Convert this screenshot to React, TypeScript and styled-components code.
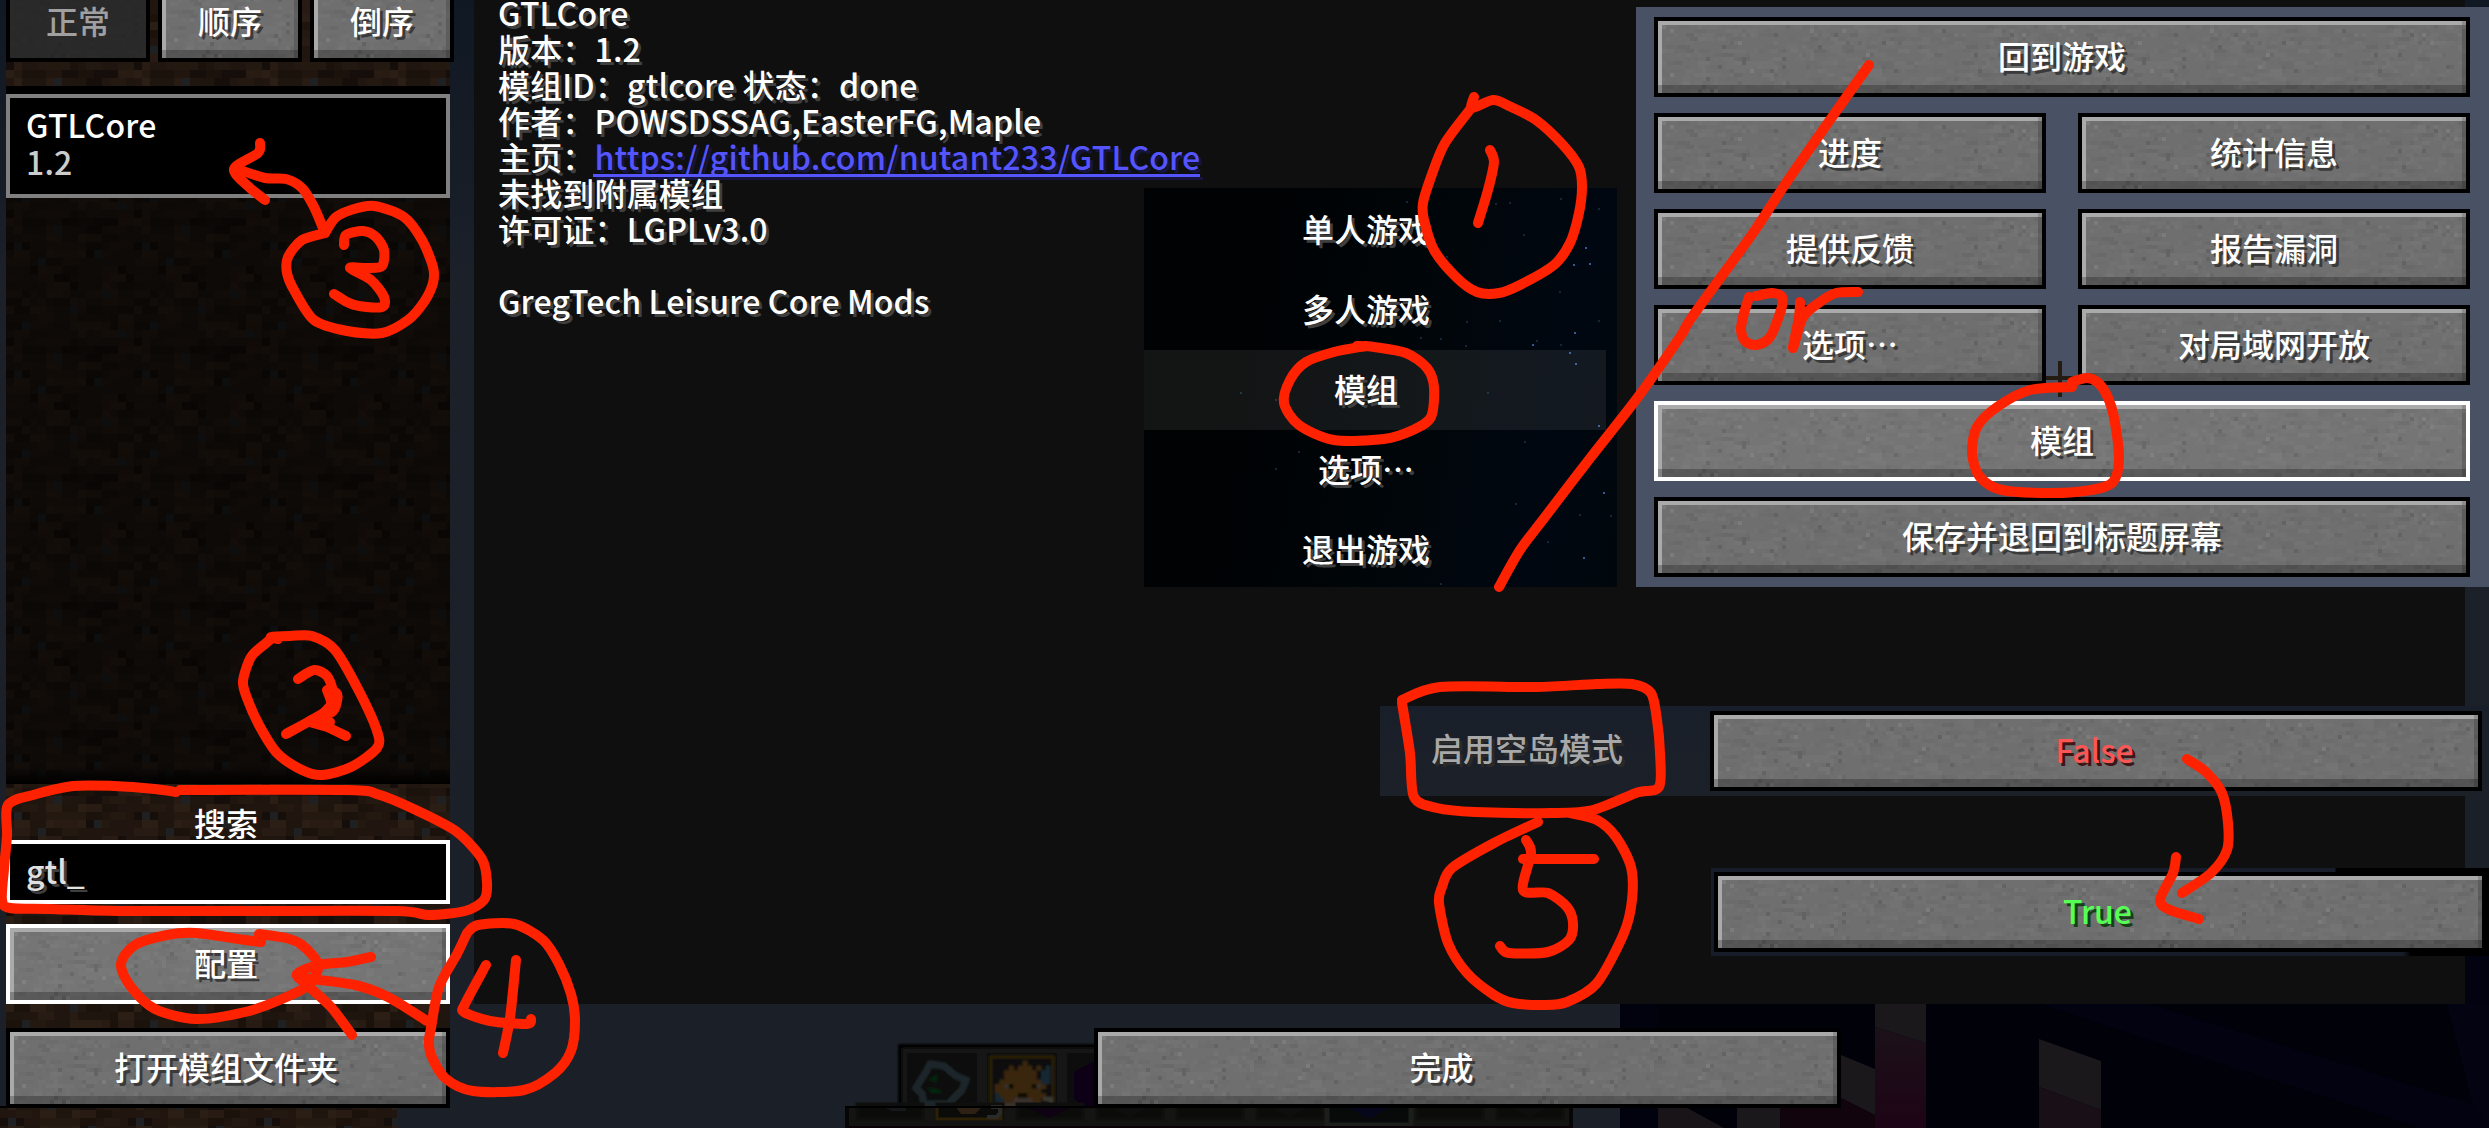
import React from "react";
import styled, { createGlobalStyle, css } from "styled-components";

const GlobalStyle = createGlobalStyle`
  * { box-sizing: border-box; }
  html, body { margin: 0; padding: 0; background: #0f0f0f; overflow: hidden; }
`;

/* ---------- helpers ---------- */

type Pt = [number, number];

function rng(seed: number) {
  let s = seed;
  return () => {
    s = (s * 1664525 + 1013904223) % 4294967296;
    return s / 4294967296;
  };
}

function smooth(pts: Pt[]): string {
  let d = `M${pts[0][0]} ${pts[0][1]}`;
  for (let i = 0; i < pts.length - 1; i++) {
    const p0 = pts[Math.max(0, i - 1)];
    const p1 = pts[i];
    const p2 = pts[i + 1];
    const p3 = pts[Math.min(pts.length - 1, i + 2)];
    const k = 7;
    d += `C${(p1[0] + (p2[0] - p0[0]) / k).toFixed(1)} ${(p1[1] + (p2[1] - p0[1]) / k).toFixed(1)} ${(p2[0] - (p3[0] - p1[0]) / k).toFixed(1)} ${(p2[1] - (p3[1] - p1[1]) / k).toFixed(1)} ${p2[0]} ${p2[1]}`;
  }
  return d;
}

/* ---------- textures ---------- */

const dirtPalette = ["#20160f", "#1b120c", "#2b1e15", "#150e0a", "#241911", "#1e150f", "#20160f", "#281b14"];
const dirtStones = ["6,1", "1,3", "11,4", "4,5", "12,9", "8,11", "2,13", "14,14"];

function dirtCells() {
  const r = rng(77);
  const out: React.ReactNode[] = [];
  for (let y = 0; y < 16; y++) {
    let x = 0;
    while (x < 16) {
      const run = Math.min(16 - x, r() > 0.55 ? 2 : 1);
      const fill = dirtPalette[Math.floor(r() * dirtPalette.length)];
      out.push(<rect key={`${x}-${y}`} x={x * 8} y={y * 8} width={run * 8} height={8} fill={fill} />);
      x += run;
    }
  }
  dirtStones.forEach((s) => {
    const [x, y] = s.split(",").map(Number);
    out.push(<rect key={`s${s}`} x={x * 8} y={y * 8} width={8} height={8} fill="#1e2022" />);
  });
  return out;
}

function stoneCells() {
  const r = rng(4242);
  const out: React.ReactNode[] = [];
  const shades = ["#6c6c6c", "#727272", "#6d6d6d", "#717171", "#747474", "#696969", "#6d6d6d", "#727272"];
  for (let i = 0; i < 620; i++) {
    const x = Math.floor(r() * 98) * 4;
    const y = Math.floor(r() * 18) * 4;
    const w = (1 + Math.floor(r() * 3)) * 4;
    out.push(<rect key={i} x={x} y={y} width={w} height={4} fill={shades[Math.floor(r() * 8)]} />);
  }
  for (let i = 0; i < 40; i++) {
    const x = Math.floor(r() * 98) * 4;
    const y = Math.floor(r() * 18) * 4;
    out.push(<rect key={`d${i}`} x={x} y={y} width={4} height={4} fill={i % 3 ? "#636363" : "#7b7b7b"} />);
  }
  return out;
}

const DefsSvg = styled.svg`
  position: absolute;
  width: 0;
  height: 0;
`;

const TextureDefs = () => (
  <DefsSvg aria-hidden>
    <defs>
      <pattern id="dirt-a" width="128" height="128" patternUnits="userSpaceOnUse" y="4" shapeRendering="crispEdges">
        {dirtCells()}
      </pattern>
      <pattern id="dirt-b" width="128" height="128" patternUnits="userSpaceOnUse" y="70" shapeRendering="crispEdges">
        {dirtCells()}
      </pattern>
      <pattern id="stone" width="400" height="72" patternUnits="userSpaceOnUse" shapeRendering="crispEdges">
        <rect width="400" height="72" fill="#6f6f6f" />
        {stoneCells()}
      </pattern>
    </defs>
  </DefsSvg>
);

const FillSvg = styled.svg`
  position: absolute;
  inset: 0;
  width: 100%;
  height: 100%;
  z-index: -2;
`;

const Texture = ({ id }: { id: string }) => (
  <FillSvg aria-hidden>
    <rect width="100%" height="100%" fill={`url(#${id})`} />
  </FillSvg>
);

/* ---------- shared ---------- */

const shadow = css`
  text-shadow: 3px 3px 0 #3f3f3f;
`;

type ButtonState = "normal" | "hover" | "disabled";

const ButtonBox = styled.button<{ $state: ButtonState; $w?: number; $nudge?: number }>`
  position: relative;
  isolation: isolate;
  flex: none;
  width: ${(p) => (p.$w ? `${p.$w}px` : "100%")};
  height: 80px;
  margin: 0;
  padding: 0 ${(p) => (p.$nudge ? p.$nudge : 0)}px 4px 0;
  border: 4px solid ${(p) => (p.$state === "hover" ? "#fff" : "#000")};
  background: none;
  display: flex;
  align-items: center;
  justify-content: center;
  font: inherit;
  color: ${(p) => (p.$state === "disabled" ? "#a0a0a0" : "#fff")};
  text-shadow: ${(p) => (p.$state === "disabled" ? "none" : "3px 3px 0 #3a3a3a")};
  white-space: nowrap;

  &::after {
    content: "";
    position: absolute;
    inset: 0;
    z-index: -1;
    background: ${(p) =>
      p.$state === "disabled" ? "rgba(22,22,22,.78)" : p.$state === "hover" ? "rgba(255,255,255,.045)" : "none"};
    box-shadow: ${(p) =>
      p.$state === "disabled"
        ? "none"
        : "inset 0 -8px 0 rgba(0,0,0,.24), inset -4px 0 0 rgba(0,0,0,.16), inset 0 4px 0 #aaaaaa, inset 4px 0 0 #aaaaaa"};
  }
`;

const Tint = styled.span<{ $c: string; $s: string }>`
  color: ${(p) => p.$c};
  text-shadow: 3px 3px 0 ${(p) => p.$s};
`;

interface GameButtonProps {
  children: React.ReactNode;
  state?: ButtonState;
  w?: number;
  nudge?: number;
}

const GameButton = ({ children, state = "normal", w, nudge }: GameButtonProps) => (
  <ButtonBox $state={state} $w={w} $nudge={nudge}>
    <Texture id="stone" />
    <span>{children}</span>
  </ButtonBox>
);

/* ---------- page ---------- */

const Screen = styled.div`
  position: relative;
  isolation: isolate;
  width: 2489px;
  height: 1128px;
  overflow: hidden;
  display: flex;
  padding-left: 6px;
  background: linear-gradient(#101823 0, #1b2029 280px, #1b2028 100%);
  font-family: "Noto Sans CJK SC", "Noto Sans", sans-serif;
  font-size: 32px;
  font-weight: 500;
  line-height: 36px;
  color: #fff;
`;

const Sidebar = styled.aside`
  flex: none;
  width: 444px;
  height: 1108px;
  display: flex;
  flex-direction: column;
`;

const SortBar = styled.div`
  position: relative;
  isolation: isolate;
  height: 86px;
  flex: none;
  display: flex;
  gap: 8px;
  margin-right: -4px;
  padding-right: 4px;

  & > button {
    margin-top: -18px;
  }
`;

const SortClip = styled.div`
  position: absolute;
  inset: 0 4px 0 0;
  z-index: -1;
`;

const ModList = styled.div`
  position: relative;
  isolation: isolate;
  height: 698px;
  flex: none;
  padding-top: 8px;

  &::before {
    content: "";
    position: absolute;
    inset: 0;
    z-index: -1;
    background: linear-gradient(#000 8px, rgba(0, 0, 0, 0.56) 8px, rgba(0, 0, 0, 0.56) calc(100% - 18px), #000 100%);
  }
`;

const ModCard = styled.div`
  height: 104px;
  padding: 8px 16px 0;
  border: 4px solid #808080;
  background: #000;
  display: flex;
  flex-direction: column;
  gap: 1px;
  letter-spacing: 0.16px;
`;

const ModVersion = styled.span`
  color: #cccccc;
`;

const SearchArea = styled.div`
  position: relative;
  isolation: isolate;
  flex: 1;
  display: flex;
  flex-direction: column;
  padding-top: 20px;
`;

const SearchLabel = styled.label`
  height: 36px;
  text-align: center;
  padding-right: 4px;
`;

const SearchField = styled.div`
  height: 64px;
  border: 4px solid #fff;
  background: #000;
  padding: 6px 16px 0;
  line-height: 40px;
  color: #e0e0e0;
  ${shadow}
`;

const SearchActions = styled.div`
  display: flex;
  flex-direction: column;
  gap: 24px;
  padding-top: 20px;
`;

const Main = styled.main`
  flex: 1;
  display: flex;
  flex-direction: column;
  padding: 0 24px;
`;

const InfoPanel = styled.section`
  height: 1004px;
  flex: none;
  background: #0f0f0f;
  padding: 0 24px;
  display: flex;
  flex-direction: column;
`;

const InfoLine = styled.p`
  height: 36px;
  margin: 0;
  white-space: pre;
  position: relative;
  top: -6px;
  letter-spacing: 0.16px;
  ${shadow}
`;

const Link = styled.a`
  position: relative;
  color: #5555ff;
  text-shadow: 3px 3px 0 #15153f;

  &::after {
    content: "";
    position: absolute;
    left: -1px;
    right: 0;
    bottom: 2px;
    height: 3px;
    background: #5555ff;
    box-shadow: 3px 3px 0 #15153f;
  }
`;

const Footer = styled.footer`
  display: flex;
  padding: 24px 0 0 620px;
`;

/* ---------- overlays ---------- */

const TitleMenu = styled.nav`
  position: absolute;
  left: 1144px;
  top: 188px;
  width: 473px;
  height: 399px;
  isolation: isolate;
  overflow: hidden;
  background: linear-gradient(100deg, #000203 20%, #00060a 60%, #010711 85%, #00070b 100%);
  display: flex;
  flex-direction: column;
  padding: 2px 11px 0 0;
`;

const TitleItem = styled.a<{ $active?: boolean }>`
  height: 80px;
  flex: none;
  display: flex;
  align-items: center;
  justify-content: center;
  padding: 0 18px 4px 0;
  background: ${(p) => (p.$active ? "rgba(255,250,240,.075)" : "none")};
  ${shadow}
`;

const PauseMenu = styled.nav`
  position: absolute;
  left: 1636px;
  top: 7px;
  width: 853px;
  height: 580px;
  padding: 10px 19px 0 18px;
  background: #485264;
  display: grid;
  grid-template-columns: 392px 392px;
  column-gap: 32px;
  grid-auto-rows: 80px;
  row-gap: 16px;
`;

const Wide = styled.div`
  grid-column: 1 / -1;
`;

const OptionRow = styled.div`
  position: absolute;
  left: 1380px;
  top: 706px;
  width: 1109px;
  height: 90px;
  padding: 5px 7px 0 51px;
  background: linear-gradient(#191f2a, #1c2028);
  display: flex;
  justify-content: space-between;
`;

const OptionLabel = styled.span`
  height: 80px;
  line-height: 72px;
  color: #a8a8a8;
  text-shadow: 3px 3px 0 #2a2a2a;
`;

const TrueRow = styled.div`
  position: absolute;
  left: 1711px;
  top: 868px;
  width: 778px;
  height: 88px;
  padding: 4px 0 0 3px;
  background:
    linear-gradient(90deg, #161d28 624px, #000 625px) top / 100% 44px no-repeat,
    linear-gradient(90deg, #161d28 692px, #000 700px) bottom / 100% 44px no-repeat;
`;

const Layer = styled.svg<{ $z: number }>`
  position: absolute;
  inset: 0;
  width: 2489px;
  height: 1128px;
  z-index: ${(p) => p.$z};
  pointer-events: none;
`;

/* ---------- game scene behind the menus ---------- */

const slotsTop = [909, 989, 1069];
const slotsBottom = [857, 937, 1017, 1097, 1177, 1257, 1337, 1417, 1497];

const fishPixels: [number, number, string][] = (() => {
  const rows = [
    "......o.....",
    "...o.ooo.o.b",
    "..ooooooo.bb",
    "..ooooooo.bb",
    ".ooooooooobb",
    "oowdoooodwo.",
    "oooooooooo..",
    "booooddoooo.",
    "bboowwwwoo..",
    ".owwwwwwww..",
  ];
  const colors: Record<string, string> = { o: "#3a260a", w: "#39302a", d: "#0c0906", b: "#172833" };
  const out: [number, number, string][] = [];
  rows.forEach((row, y) => row.split("").forEach((c, x) => c !== "." && out.push([x, y, colors[c]])));
  return out;
})();

const Scene = () => (
  <Layer $z={-1} aria-hidden>
    <defs>
      <linearGradient id="mag" x1="0" y1="0" x2="0" y2="1">
        <stop offset="0" stopColor="#1b1119" />
        <stop offset="1" stopColor="#1e0416" />
      </linearGradient>
      <filter id="soft" x="-5%" y="-5%" width="110%" height="110%">
        <feGaussianBlur stdDeviation="1.3" />
      </filter>
    </defs>
    <rect x="0" y="1106" width="397" height="22" fill="url(#dirt-b)" />
    <rect x="0" y="1106" width="450" height="2" fill="#000" />
    <rect x="1620" y="1004" width="869" height="124" fill="#010109" />
    <rect x="1620" y="1004" width="38" height="124" fill="#02020f" />
    <rect x="2465" y="956" width="24" height="60" fill="#020210" />
    <path d="M2040 1004H2150L2475 1105L2489 1128H2420Z" fill="#020210" />
    <path d="M2447 1004H2489V1128L2473 1104Z" fill="#040312" />
    <path d="M1841 1055L1875 1069V1115L1841 1098Z" fill="#1a181a" />
    <path d="M1841 1098L1875 1115V1128H1780V1108H1841Z" fill="#12040d" />
    <path d="M1875 1004H1926V1043L1875 1027Z" fill="#1a181a" />
    <path d="M1875 1027L1926 1043V1128H1875Z" fill="url(#mag)" />
    <path d="M2039 1039L2101 1061V1110L2039 1087Z" fill="#1a181a" />
    <path d="M2039 1087L2101 1110V1128H2039Z" fill="#190f16" />
    <path d="M1658 1104H1680L1724 1128H1658Z" fill="#181417" />
    <rect x="1737" y="1106" width="43" height="22" fill="#1a181a" />
    <g filter="url(#soft)">
      <path d="M898 1107V1044H1100V1107Z" fill="#060606" />
      <rect x="902" y="1048" width="200" height="58" fill="#151513" />
      {slotsTop.map((x) => (
        <rect key={x} x={x} y="1055" width="66" height="52" fill="#0b0c0a" stroke="#0e0e0d" strokeWidth="4" />
      ))}
      <path
        d="M930 1064L944 1066L956 1076L966 1080L962 1090L956 1096L948 1104L924 1104L922 1094L916 1088L922 1078L926 1072Z"
        fill="#0a0d0a"
        stroke="#1d272b"
        strokeWidth="7"
      />
      <path d="M928 1080l9-6v8zM927 1087l13 3 2 3h-11z" fill="#06260a" />
      <rect x="991" y="1057" width="62" height="54" fill="none" stroke="#2c2006" strokeWidth="3" />
      {fishPixels.map(([x, y, c], i) => (
        <rect key={i} x={995 + x * 4.6} y={1061 + y * 4.6} width="5" height="5" fill={c} />
      ))}
      <path d="M1043 1099h8v6" fill="none" stroke="#3a3733" strokeWidth="4" />
      <path d="M1074 1072l20-11v46h-12l-8-8z" fill="#100213" />
    </g>
    <rect x="845" y="1106" width="728" height="22" fill="#060606" />
    <rect x="849" y="1106" width="720" height="20" fill="#141412" />
    {slotsBottom.map((x) => (
      <rect key={x} x={x} y="1104" width="66" height="15" fill="#0b0c0a" stroke="#0f0f0e" strokeWidth="3" />
    ))}
    <path d="M937 1106v13h64v-13" fill="none" stroke="#2c2006" strokeWidth="3" />
    <path d="M880 1106h26v5h-14z" fill="#14181b" />
    <path d="M1024 1106h50l-25 12z" fill="#0f0213" />
    <path d="M1110 1106h40l-21 12zM1270 1106h40l-21 12zM1510 1106h40l-21 12z" fill="#0e0e0e" />
    <path d="M955 1106h28l-8 8h-14z" fill="#2e2113" />
    <path d="M987 1117h10l3-4v-6h-9" fill="none" stroke="#2a2a28" strokeWidth="4" />
    <path d="M1327 1106v19h84v-19" fill="#080a0a" stroke="#1c1e1b" strokeWidth="5" />
    <path d="M1346 1106h46l-23 13z" fill="#07071c" />
    <rect x="845" y="1106" width="249" height="2" fill="#000" />
    <rect x="845" y="1126" width="728" height="2" fill="#0c0309" />
  </Layer>
);

const stars: Pt[] = [
  [1232, 353], [1338, 385], [1050, 368], [1090, 366], [1128, 461], [1301, 500], [1267, 552], [1313, 550], [912, 528],
  [800, 362], [1228, 632], [968, 722], [1060, 720], [1338, 721], [1270, 757], [1164, 780], [1153, 793], [895, 775],
  [841, 770], [966, 795], [1232, 793], [1256, 815], [1274, 850], [1338, 1035], [1131, 1083], [1353, 1237],
  [1105, 1270], [1284, 1303], [1372, 1305], [1296, 1430], [1195, 1382], [895, 1508], [435, 1165], [497, 1112],
  [435, 957], [336, 937], [1027, 936], [633, 680],
];

const bright = new Set([5, 6, 7, 14, 16, 21, 22, 23, 25, 29]);

const Stars = () => (
  <FillSvg aria-hidden shapeRendering="crispEdges">
    {stars.map(([x, y], i) => (
      <rect
        key={i}
        x={Math.round(x / 2.8 - 24)}
        y={Math.round(y / 3 - 108)}
        width="2"
        height="2"
        fill={bright.has(i) ? "#2f5c94" : "#12283a"}
      />
    ))}
  </FillSvg>
);

/* ---------- red pen marks ---------- */

const strokes: Pt[][] = [
  [[325, 233], [335, 218], [351, 210], [374, 206], [404, 217], [422, 240], [433, 267], [433, 283], [424, 302], [408, 320], [382, 333], [347, 331], [314, 320], [294, 290], [287, 273], [288, 257], [302, 240], [325, 233]],
  [[325, 233], [314, 207], [302, 188], [286, 179], [265, 178], [237, 169]],
  [[260, 143], [258, 153], [234, 169], [249, 187], [265, 200]],
  [[344, 245], [346, 235], [363, 231], [376, 237], [384, 250], [382, 266], [367, 268], [350, 268], [371, 280], [384, 297], [382, 307], [359, 306], [347, 302], [334, 294]],
  [[1474, 97], [1472, 108], [1493, 100], [1509, 106], [1536, 120], [1563, 145], [1579, 167], [1582, 187], [1579, 213], [1570, 243], [1554, 265], [1520, 285], [1499, 293], [1477, 292], [1456, 277], [1434, 250], [1424, 220], [1423, 203], [1431, 177], [1445, 143], [1472, 107]],
  [[1490, 150], [1494, 162], [1488, 190], [1478, 223]],
  [[1357, 346], [1374, 347], [1406, 353], [1427, 368], [1434, 387], [1431, 417], [1413, 430], [1384, 439], [1334, 440], [1299, 425], [1284, 403], [1290, 380], [1306, 362], [1334, 352], [1366, 346]],
  [[1499, 587], [1520, 550], [1545, 517], [1591, 457], [1638, 397], [1680, 337], [1692, 317], [1753, 233], [1786, 183], [1842, 103], [1869, 65]],
  [[1749, 297], [1743, 317], [1741, 330], [1745, 341], [1756, 345], [1770, 337], [1781, 310], [1782, 297], [1772, 293], [1756, 296]],
  [[1800, 302], [1799, 317], [1793, 348], [1803, 317], [1820, 302], [1836, 293], [1858, 292]],
  [[2072, 387], [2030, 390], [1997, 407], [1977, 427], [1972, 453], [1980, 477], [2002, 490], [2052, 493], [2091, 490], [2113, 482], [2119, 457], [2113, 413], [2102, 387], [2088, 378], [2072, 382]],
  [[278, 639], [271, 637], [290, 636], [312, 636], [335, 650], [359, 691], [377, 731], [377, 748], [351, 767], [322, 775], [302, 770], [277, 753], [259, 725], [247, 698], [243, 681], [251, 657], [265, 644], [271, 639]],
  [[298, 679], [314, 670], [327, 676], [333, 691], [333, 701], [325, 712], [286, 734]],
  [[332, 690], [337, 694], [337, 701], [332, 712], [310, 721], [327, 727], [346, 736]],
  [[316, 718], [324, 722]],
  [[327, 690], [331, 704], [322, 716], [330, 722]],
  [[176, 792], [155, 789], [114, 786], [73, 786], [33, 795], [8, 805], [7, 836], [4, 869], [2, 900], [10, 908], [49, 909], [118, 911], [245, 911], [396, 911], [429, 915], [465, 911], [484, 900], [487, 883], [482, 859], [457, 832], [420, 812], [380, 795], [347, 790], [180, 790]],
  [[261, 942], [245, 940], [196, 933], [167, 935], [135, 945], [121, 964], [131, 987], [155, 1009], [196, 1019], [245, 1012], [282, 999], [310, 984], [318, 964], [302, 945], [286, 938], [259, 934]],
  [[371, 957], [347, 962], [318, 965], [297, 974], [306, 984], [331, 1007], [352, 1035]],
  [[302, 978], [355, 985], [388, 997], [427, 1021]],
  [[467, 933], [478, 925], [514, 924], [543, 940], [559, 964], [571, 994], [575, 1021], [571, 1051], [555, 1073], [524, 1090], [473, 1091], [445, 1078], [431, 1055], [429, 1040], [431, 1028], [439, 987], [457, 954], [467, 933]],
  [[486, 965], [465, 1004], [464, 1012], [490, 1021], [527, 1024], [531, 1019]],
  [[516, 960], [510, 1018], [503, 1053]],
  [[1402, 700], [1440, 687], [1536, 687], [1597, 684], [1632, 684], [1651, 693], [1657, 720], [1660, 753], [1659, 787], [1636, 793], [1593, 810], [1551, 813], [1475, 812], [1437, 808], [1414, 797], [1410, 753], [1402, 703]],
  [[1538, 822], [1494, 843], [1452, 868], [1442, 887], [1439, 903], [1448, 943], [1467, 973], [1494, 995], [1513, 1003], [1544, 1005], [1567, 1002], [1597, 983], [1624, 933], [1632, 900], [1631, 867], [1616, 837], [1597, 820], [1570, 813]],
  [[1526, 840], [1531, 853], [1523, 890], [1548, 893], [1567, 907], [1573, 923], [1569, 940], [1548, 952], [1509, 953], [1500, 946]],
  [[1523, 859], [1594, 859]],
  [[2187, 759], [2206, 772], [2222, 793], [2228, 823], [2227, 850], [2211, 873], [2182, 893]],
  [[2176, 857], [2173, 873], [2160, 900], [2170, 910], [2199, 919]],
];

const PenMarks = () => (
  <Layer $z={5} aria-hidden>
    <g fill="none" stroke="#ff2200" strokeWidth="10" strokeLinecap="round" strokeLinejoin="round">
      {strokes.map((s, i) => (
        <path key={i} d={smooth(s)} />
      ))}
    </g>
  </Layer>
);

const Crosshair = () => (
  <Layer $z={1} aria-hidden>
    <path d="M2060 361V397M2046 378H2078" stroke="#241c12" strokeWidth="4" fill="none" />
  </Layer>
);

export default function App() {
  return (
    <>
      <GlobalStyle />
      <TextureDefs />
      <Screen lang="zh-CN">
        <Scene />
        <Sidebar>
          <SortBar>
            <SortClip>
              <Texture id="dirt-b" />
            </SortClip>
            <GameButton state="disabled" w={144}>正常</GameButton>
            <GameButton w={144}>顺序</GameButton>
            <GameButton w={144}>倒序</GameButton>
          </SortBar>
          <ModList>
            <Texture id="dirt-a" />
            <ModCard>
              <span>GTLCore</span>
              <ModVersion>1.2</ModVersion>
            </ModCard>
          </ModList>
          <SearchArea>
            <Texture id="dirt-a" />
            <SearchLabel>搜索</SearchLabel>
            <SearchField>gtl_</SearchField>
            <SearchActions>
              <GameButton state="hover" nudge={4}>配置</GameButton>
              <GameButton nudge={4}>打开模组文件夹</GameButton>
            </SearchActions>
          </SearchArea>
        </Sidebar>
        <Main>
          <InfoPanel>
            <InfoLine>GTLCore</InfoLine>
            <InfoLine>版本：1.2</InfoLine>
            <InfoLine>模组ID：gtlcore 状态：done</InfoLine>
            <InfoLine>作者：POWSDSSAG,EasterFG,Maple</InfoLine>
            <InfoLine>
              主页：<Link>https://github.com/nutant233/GTLCore</Link>
            </InfoLine>
            <InfoLine>未找到附属模组</InfoLine>
            <InfoLine>许可证：LGPLv3.0</InfoLine>
            <InfoLine> </InfoLine>
            <InfoLine>GregTech Leisure Core Mods</InfoLine>
          </InfoPanel>
          <Footer>
            <GameButton w={747} nudge={52}>完成</GameButton>
          </Footer>
        </Main>

        <TitleMenu>
          <Stars />
          <TitleItem>单人游戏</TitleItem>
          <TitleItem>多人游戏</TitleItem>
          <TitleItem $active>模组</TitleItem>
          <TitleItem>选项…</TitleItem>
          <TitleItem>退出游戏</TitleItem>
        </TitleMenu>

        <PauseMenu>
          <Wide>
            <GameButton>回到游戏</GameButton>
          </Wide>
          <GameButton>进度</GameButton>
          <GameButton>统计信息</GameButton>
          <GameButton>提供反馈</GameButton>
          <GameButton>报告漏洞</GameButton>
          <GameButton>选项…</GameButton>
          <GameButton>对局域网开放</GameButton>
          <Wide>
            <GameButton state="hover">模组</GameButton>
          </Wide>
          <Wide>
            <GameButton>保存并退回到标题屏幕</GameButton>
          </Wide>
        </PauseMenu>
        <Crosshair />

        <OptionRow>
          <OptionLabel>启用空岛模式</OptionLabel>
          <GameButton w={772} nudge={3}>
            <Tint $c="#ff5555" $s="#3f1515">False</Tint>
          </GameButton>
        </OptionRow>
        <TrueRow>
          <GameButton w={772} nudge={5}>
            <Tint $c="#55ff55" $s="#153f15">True</Tint>
          </GameButton>
        </TrueRow>
        <PenMarks />
      </Screen>
    </>
  );
}
